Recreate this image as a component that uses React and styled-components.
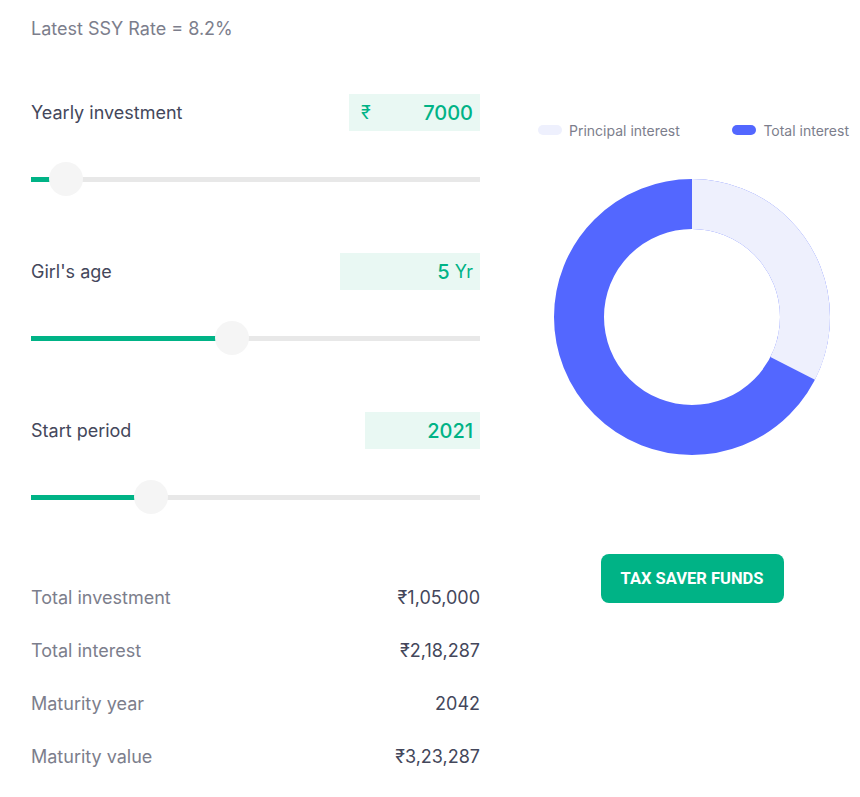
import React from 'react'
import styled, { createGlobalStyle } from 'styled-components'

const colors = {
  green: '#00b386',
  greenTint: '#e9f8f3',
  text: '#44475b',
  muted: '#7c7e8c',
  track: '#e8e8e8',
  thumb: '#f5f5f5',
  blue: '#5367ff',
  lavender: '#eef0fd'
}

const GlobalStyle = createGlobalStyle`
  body {
    margin: 0;
    background: #ffffff;
    font-family: Inter, "Noto Sans", sans-serif;
    color: ${colors.text};
  }
`

const sliders = [
  { key: 'yearly', label: 'Yearly investment', prefix: '₹', value: '7000', boxWidth: 131, pct: 18 / 415 },
  { key: 'age', label: "Girl's age", value: '5', suffix: 'Yr', boxWidth: 140, pct: 184 / 415 },
  { key: 'start', label: 'Start period', value: '2021', boxWidth: 115, pct: 103 / 415 }
]

const summary = [
  { label: 'Total investment', value: '₹1,05,000' },
  { label: 'Total interest', value: '₹2,18,287' },
  { label: 'Maturity year', value: '2042' },
  { label: 'Maturity value', value: '₹3,23,287' }
]

const principal = 105000
const total = 323287

const Donut = ({ share }) => {
  const cx = 138
  const cy = 138
  const r = 113
  const stroke = 50
  const c = 2 * Math.PI * r
  return (
    <svg width='276' height='276' viewBox='0 0 276 276'>
      <circle cx={cx} cy={cy} r={r} fill='none' stroke={colors.blue} strokeWidth={stroke} />
      <circle
        cx={cx}
        cy={cy}
        r={r}
        fill='none'
        stroke={colors.lavender}
        strokeWidth={stroke}
        strokeDasharray={`${c * share} ${c}`}
        transform={`rotate(-90 ${cx} ${cy})`}
      />
    </svg>
  )
}

const App = () => {
  return (
    <>
      <GlobalStyle />
      <Page>
        <LeftColumn>
          <RateTitle>Latest SSY Rate = 8.2%</RateTitle>
          {sliders.map((s) => (
            <Block key={s.key}>
              <Header>
                <Label>{s.label}</Label>
                <ValueBox $width={s.boxWidth}>
                  {s.prefix && <Prefix>{s.prefix}</Prefix>}
                  <Value>{s.value}</Value>
                  {s.suffix && <Suffix>{s.suffix}</Suffix>}
                </ValueBox>
              </Header>
              <Slider>
                <Fill style={{ width: `${s.pct * 100}%` }} />
                <Thumb style={{ left: `calc((100% - 34px) * ${s.pct})` }} />
              </Slider>
            </Block>
          ))}
          <Summary>
            {summary.map((row) => (
              <SummaryRow key={row.label}>
                <SummaryLabel>{row.label}</SummaryLabel>
                <SummaryValue>{row.value}</SummaryValue>
              </SummaryRow>
            ))}
          </Summary>
        </LeftColumn>
        <RightColumn>
          <Legend>
            <LegendItem>
              <Swatch $color={colors.lavender} />
              Principal interest
            </LegendItem>
            <LegendItem>
              <Swatch $color={colors.blue} />
              Total interest
            </LegendItem>
          </Legend>
          <ChartWrap>
            <Donut share={principal / total} />
          </ChartWrap>
          <CTA>TAX SAVER FUNDS</CTA>
        </RightColumn>
      </Page>
    </>
  )
}

const Page = styled.div`
  display: flex;
  width: 860px;
  height: 797px;
  padding: 0 0 0 31px;
  box-sizing: border-box;
  gap: 55px;
`

const LeftColumn = styled.div`
  width: 449px;
  display: flex;
  flex-direction: column;
  padding-top: 17px;
`

const RateTitle = styled.div`
  font-size: 18px;
  line-height: 24px;
  color: ${colors.muted};
  margin-bottom: 53px;
`

const Block = styled.div`
  display: flex;
  flex-direction: column;
  margin-bottom: 57px;
`

const Header = styled.div`
  display: flex;
  align-items: center;
  justify-content: space-between;
  height: 37px;
`

const Label = styled.span`
  font-size: 18px;
  color: ${colors.text};
`

const ValueBox = styled.div`
  width: ${(p) => p.$width}px;
  height: 37px;
  box-sizing: border-box;
  background: ${colors.greenTint};
  display: flex;
  align-items: center;
  padding: 0 7px 0 12px;
  color: ${colors.green};
`

const Prefix = styled.span`
  font-size: 18px;
  margin-right: auto;
`

const Value = styled.span`
  margin-left: auto;
  font-size: 20px;
  font-weight: 500;
`

const Suffix = styled.span`
  font-size: 18px;
  margin-left: 5px;
`

const Slider = styled.div`
  position: relative;
  margin-top: 31px;
  height: 34px;
  display: flex;
  align-items: center;

  &::before {
    content: '';
    position: absolute;
    left: 0;
    right: 0;
    top: 15px;
    height: 5px;
    background: ${colors.track};
  }
`

const Fill = styled.div`
  position: relative;
  height: 5px;
  background: ${colors.green};
`

const Thumb = styled.div`
  position: absolute;
  top: 0;
  width: 34px;
  height: 34px;
  border-radius: 50%;
  background: ${colors.thumb};
`

const Summary = styled.div`
  display: flex;
  flex-direction: column;
`

const SummaryRow = styled.div`
  display: flex;
  justify-content: space-between;
  align-items: center;
  height: 53px;
  font-size: 18px;
`

const SummaryLabel = styled.span`
  color: ${colors.muted};
`

const SummaryValue = styled.span`
  color: ${colors.text};
`

const RightColumn = styled.div`
  width: 314px;
  display: flex;
  flex-direction: column;
  align-items: center;
  padding-top: 121px;
`

const Legend = styled.div`
  display: flex;
  align-self: stretch;
  justify-content: space-between;
  padding-left: 3px;
  height: 18px;
`

const LegendItem = styled.div`
  display: flex;
  align-items: center;
  gap: 7px;
  font-size: 14px;
  color: ${colors.muted};
`

const Swatch = styled.span`
  width: 24px;
  height: 10px;
  border-radius: 5px;
  background: ${(p) => p.$color};
`

const ChartWrap = styled.div`
  margin-top: 40px;
  width: 276px;
  height: 276px;
`

const CTA = styled.button`
  margin-top: 99px;
  width: 183px;
  height: 49px;
  border: none;
  border-radius: 8px;
  background: ${colors.green};
  color: #ffffff;
  font-family: Roboto, Inter, sans-serif;
  font-size: 16.5px;
  font-weight: 700;
  cursor: pointer;
`

export default App
